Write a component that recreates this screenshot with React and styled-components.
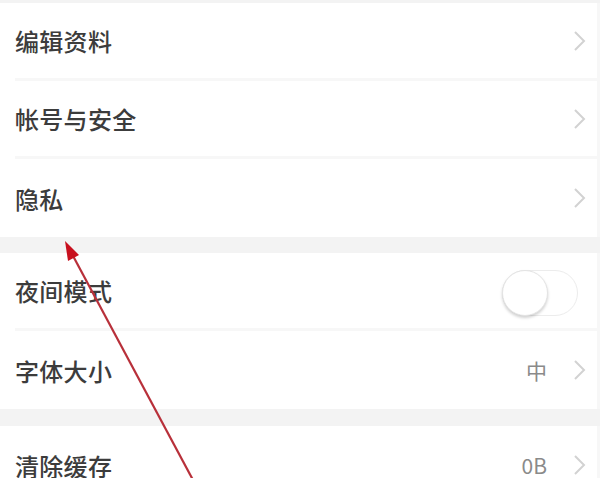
import React from 'react';
import styled, { createGlobalStyle } from 'styled-components';

const GlobalStyle = createGlobalStyle`
  html, body {
    margin: 0;
    padding: 0;
    background: #fff;
  }
  body {
    font-family: "Noto Sans CJK SC", "Noto Sans", sans-serif;
  }
`;

const Screen = styled.div`
  position: relative;
  width: 600px;
  height: 478px;
  overflow: hidden;
  background: #fff;
  display: flex;
  flex-direction: column;
`;

const Gap = styled.div`
  flex: none;
  height: ${(p) => p.size}px;
  background: #f3f3f3;
`;

const Group = styled.div`
  flex: none;
  display: flex;
  flex-direction: column;
  padding-left: 15px;
  padding-right: 3px;
  background: #fff;
  box-shadow: inset -3px 0 0 #f7f7f7;
`;

const Row = styled.div`
  height: 78px;
  display: flex;
  align-items: center;
  gap: 12px;
  border-bottom: ${(p) => (p.last ? 'none' : '3px solid #f7f7f7')};
  box-sizing: border-box;
`;

const Label = styled.span`
  flex: 1;
  font-size: 24px;
  font-weight: 500;
  color: #3c3c3c;
  letter-spacing: 0.3px;
`;

const Value = styled.span`
  font-size: 21px;
  color: #8a8a8a;
  margin-right: 14px;
`;

const Chevron = styled.svg`
  width: 14px;
  height: 22px;
  margin-right: 10px;
  flex: none;
`;

const Toggle = styled.div`
  position: relative;
  width: 76px;
  height: 46px;
  margin-right: 19px;
  margin-top: 4px;
  border-radius: 23px;
  border: 1.5px solid #ececec;
  background: #fff;
  box-sizing: border-box;
`;

const Knob = styled.div`
  position: absolute;
  left: -1px;
  top: -1px;
  width: 46px;
  height: 46px;
  border-radius: 50%;
  background: #fff;
  box-shadow: 0 2px 3px rgba(0, 0, 0, 0.18);
  border: 1px solid #e4e4e4;
  box-sizing: border-box;
`;

const Arrow = styled.svg`
  position: absolute;
  left: 0;
  top: 0;
  pointer-events: none;
`;

const Arrowed = () => (
  <Chevron viewBox="0 0 14 22">
    <path d="M2 2 L11 11 L2 20" fill="none" stroke="#d2d2d2" strokeWidth="2" />
  </Chevron>
);

const Item = ({ label, value, last, toggle }) => (
  <Row last={last}>
    <Label>{label}</Label>
    {value && <Value>{value}</Value>}
    {toggle ? (
      <Toggle>
        <Knob />
      </Toggle>
    ) : (
      <Arrowed />
    )}
  </Row>
);

export default function App() {
  return (
    <Screen>
      <GlobalStyle />
      <Gap size={3} />
      <Group>
        <Item label="编辑资料" />
        <Item label="帐号与安全" />
        <Item label="隐私" last />
      </Group>
      <Gap size={16} />
      <Group>
        <Item label="夜间模式" toggle />
        <Item label="字体大小" value="中" last />
      </Group>
      <Gap size={17} />
      <Group>
        <Item label="清除缓存" value="0B" last />
      </Group>
      <Arrow width="600" height="478" viewBox="0 0 600 478">
        <line x1="72" y1="254" x2="193" y2="480" stroke="#b8303a" strokeWidth="2.2" />
        <polygon points="65,241 79,255 68,261" fill="#c8101e" />
      </Arrow>
    </Screen>
  );
}
